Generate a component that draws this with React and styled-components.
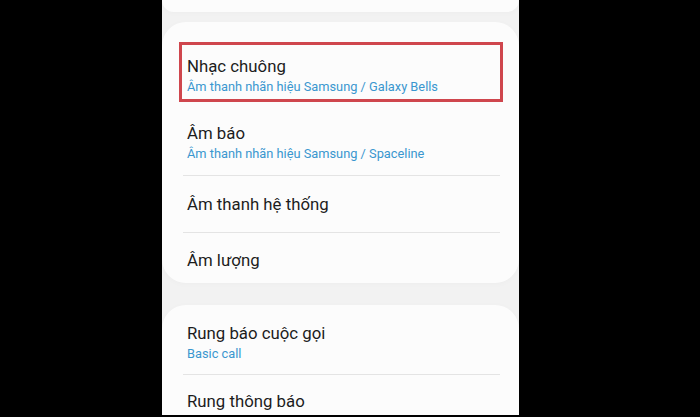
import React from 'react'
import styled, { createGlobalStyle } from 'styled-components'

const GlobalStyle = createGlobalStyle`
    html, body {
        margin: 0;
        padding: 0;
        background: #000;
    }
    body {
        font-family: Roboto, 'Noto Sans', 'Liberation Sans', sans-serif;
    }
`

const Stage = styled.div`
    width: 700px;
    height: 417px;
    display: flex;
    padding-left: 162px;
    box-sizing: border-box;
    background: #000;
    overflow: hidden;
`

const Screen = styled.div`
    width: 357px;
    height: 415px;
    background: #f2f2f2;
    overflow: hidden;
    display: flex;
    flex-direction: column;
    gap: 10px;
`

const Card = styled.div`
    flex-shrink: 0;
    background: #fcfcfc;
    border-radius: 24px;
    padding-top: ${({ $padTop }) => $padTop || 0}px;
    box-shadow: 0 1px 6px rgba(0, 0, 0, 0.025);
`

const TopCard = styled(Card)`
    height: 12px;
    border-radius: 0 0 24px 24px;
`

const Spacer = styled.div`
    flex-shrink: 0;
    height: ${({ $h }) => $h}px;
`

const Row = styled.div`
    height: ${({ $h }) => $h}px;
    display: flex;
    flex-direction: column;
    justify-content: center;
    padding: ${({ $shift }) => $shift || 0}px 25px 0;
    box-sizing: border-box;
`

const Highlight = styled.div`
    margin: 0 16px 6px 17px;
    border: 3px solid #cf464d;
    box-sizing: border-box;
    height: 60px;
    display: flex;
    flex-direction: column;
    justify-content: center;
    padding: 7px 5px 0;
`

const Title = styled.div`
    font-size: 16.8px;
    color: #1c1c1c;
    line-height: 21px;
`

const Sub = styled.div`
    font-size: 12.8px;
    color: #3a97cf;
    line-height: 17px;
    margin-top: 1px;
`

const Divider = styled.div`
    height: 1px;
    background: #e4e4e4;
    margin: 0 19px 0 21px;
`

const Item = ({ title, sub, h, shift }) => (
    <Row $h={h} $shift={shift}>
        <Title>{title}</Title>
        {sub && <Sub>{sub}</Sub>}
    </Row>
)

export default function App() {
    return (
        <Stage>
            <GlobalStyle />
            <Screen>
                <TopCard />
                <Card $padTop={20}>
                    <Highlight>
                        <Title>Nhạc chuông</Title>
                        <Sub>Âm thanh nhãn hiệu Samsung / Galaxy Bells</Sub>
                    </Highlight>
                    <Item
                        h={67}
                        shift={2}
                        title="Âm báo"
                        sub="Âm thanh nhãn hiệu Samsung / Spaceline"
                    />
                    <Divider />
                    <Item h={56} title="Âm thanh hệ thống" />
                    <Divider />
                    <Item h={50} shift={4} title="Âm lượng" />
                </Card>
                <Spacer $h={2} />
                <Card $padTop={3}>
                    <Item h={66} shift={2} title="Rung báo cuộc gọi" sub="Basic call" />
                    <Divider />
                    <Item h={66} shift={4} title="Rung thông báo" sub="Tiêu chuẩn" />
                </Card>
            </Screen>
        </Stage>
    )
}
